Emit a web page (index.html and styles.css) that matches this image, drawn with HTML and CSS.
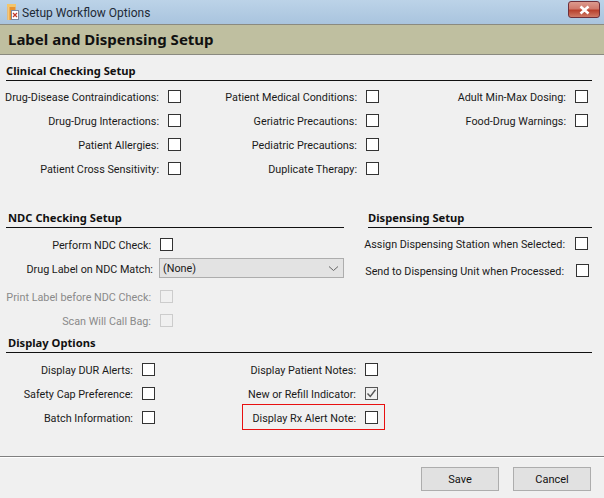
FILE: index.html
```html
<!DOCTYPE html>
<html lang="en">
<head>
<meta charset="utf-8">
<title>Setup Workflow Options</title>
<link rel="stylesheet" href="styles.css">
</head>
<body>
<div class="window">
  <div class="titlebar">
    <svg class="app-icon" width="14" height="17" viewBox="0 0 14 17"><rect x="1" y="0" width="9" height="3" fill="#f3c56a"/><rect x="1.5" y="3" width="8" height="13" fill="#e8922e"/><rect x="1.5" y="3" width="2" height="13" fill="#f6c878"/><rect x="5.500" y="6.500" width="7" height="9" fill="#fff" stroke="#7a86a0" stroke-width="1"/><path d="M7 9l4 4M11 9l-4 4" stroke="#c0392b" stroke-width="1.2"/></svg>
    <span class="title">Setup Workflow Options</span>
    <button class="close" aria-label="Close"><svg width="13" height="10" viewBox="0 0 13 10"><path d="M2.5 1.5l8 7M10.5 1.5l-8 7" stroke="#fff" stroke-width="2.6"/></svg></button>
  </div>
  <div class="band">Label and Dispensing Setup</div>
  <main class="content">
    <section class="clinical">
      <h2 class="heading">Clinical Checking Setup</h2>
      <div class="cols cols-clinical">
        <div class="col">
          <label class="row">Drug-Disease Contraindications:<i class="box"></i></label>
          <label class="row">Drug-Drug Interactions:<i class="box"></i></label>
          <label class="row">Patient Allergies:<i class="box"></i></label>
          <label class="row">Patient Cross Sensitivity:<i class="box"></i></label>
        </div>
        <div class="col">
          <label class="row">Patient Medical Conditions:<i class="box"></i></label>
          <label class="row">Geriatric Precautions:<i class="box"></i></label>
          <label class="row">Pediatric Precautions:<i class="box"></i></label>
          <label class="row">Duplicate Therapy:<i class="box"></i></label>
        </div>
        <div class="col">
          <label class="row">Adult Min-Max Dosing:<i class="box"></i></label>
          <label class="row">Food-Drug Warnings:<i class="box"></i></label>
        </div>
      </div>
    </section>
    <div class="split">
      <section class="ndc">
        <h2 class="heading">NDC Checking Setup</h2>
        <label class="row row-ndc">Perform NDC Check:<i class="box"></i></label>
        <label class="row row-select">Drug Label on NDC Match:
          <span class="select">(None)<svg width="11" height="7" viewBox="0 0 11 7"><path d="M1 1.500l4.500 4L10 1.500" fill="none" stroke="#666" stroke-width="1"/></svg></span>
        </label>
        <label class="row row-ndc disabled">Print Label before NDC Check:<i class="box"></i></label>
        <label class="row row-ndc disabled">Scan Will Call Bag:<i class="box"></i></label>
      </section>
      <section class="dispensing">
        <h2 class="heading">Dispensing Setup</h2>
        <label class="row">Assign Dispensing Station when Selected:<i class="box"></i></label>
        <label class="row row-send">Send to Dispensing Unit when Processed:<i class="box"></i></label>
      </section>
    </div>
    <section class="display">
      <h2 class="heading">Display Options</h2>
      <div class="cols cols-display">
        <div class="col">
          <label class="row">Display DUR Alerts:<i class="box"></i></label>
          <label class="row">Safety Cap Preference:<i class="box"></i></label>
          <label class="row">Batch Information:<i class="box"></i></label>
        </div>
        <div class="col">
          <label class="row">Display Patient Notes:<i class="box"></i></label>
          <label class="row">New or Refill Indicator:<i class="box checked"><svg width="11" height="11" viewBox="0 0 11 11"><path d="M1.500 5.500l2.800 3L9.500 1.800" fill="none" stroke="#555" stroke-width="1.400"/></svg></i></label>
          <label class="row alert">Display Rx Alert Note:<i class="box"></i></label>
        </div>
      </div>
    </section>
  </main>
  <footer class="footer">
    <button class="btn">Save</button>
    <button class="btn">Cancel</button>
  </footer>
</div>
</body>
</html>
```
FILE: styles.css
```css
* { box-sizing: border-box; }
html, body { margin: 0; padding: 0; }
body { width: 604px; height: 498px; overflow: hidden; background: #f0f0f0; font-family: Roboto, "Noto Sans", sans-serif; font-size: 10.800px; color: #1a1a1a; }
.window { height: 498px; display: flex; flex-direction: column; }
.titlebar { height: 24px; flex: none; display: flex; align-items: center; padding: 0 4px 0 6px; background: linear-gradient(#bcd3e8, #a9c4de); }
.app-icon { flex: none; margin-right: 2px; }
.title { flex: 1; padding-top: 2px; font-size: 12px; color: #1e2a36; }
.close { width: 32px; height: 17px; margin-top: -5px; padding: 0; border: 1px solid #6e2f3a; border-radius: 3px; display: flex; align-items: center; justify-content: center; background: linear-gradient(#dc9a8e 0, #d0796c 45%, #b8402c 55%, #cf7a66 100%); }
.band { height: 31px; flex: none; padding: 0 0 1px 8px; display: flex; align-items: center; background: #bfbfa0; border-top: 1px solid #8a8a80; border-bottom: 1px solid #8a8a80; font-family: "Noto Sans", sans-serif; font-size: 15px; font-weight: 700; color: #111; }
.content { flex: 1; padding: 0 12px 0 6px; position: relative; }
.heading { margin: 0 0 4px; height: 26px; padding: 8px 0 0; border-bottom: 1px solid #111; font-family: "Noto Sans", sans-serif; font-size: 11.200px; line-height: 15px; font-weight: 700; color: #111; }
.row { height: 24px; padding-top: 2px; display: flex; align-items: center; justify-content: flex-end; gap: 9px; white-space: nowrap; }
.box { flex: none; width: 13px; height: 13px; margin-top: -2px; background: #fff; border: 1px solid #333; display: flex; align-items: center; justify-content: center; }
.box.checked { background: #f0f0f0; border-color: #555; }
.cols { display: grid; }
.col { display: flex; flex-direction: column; }
.clinical { height: 147px; }
.clinical .heading { margin-bottom: 3px; }
.cols-clinical { grid-template-columns: 175px 198px 209px; }
.split { display: flex; gap: 24px; height: 125px; }
.ndc { width: 338px; }
.ndc .heading { padding-left: 2px; }
.row-ndc { width: 167px; }
.row-select { gap: 6px; margin-bottom: 4px; }
.select { flex: none; width: 185px; height: 20px; margin-top: -2px; display: flex; align-items: center; justify-content: space-between; padding: 0 4px 0 3px; background: #e3e3e3; border: 1px solid #adadad; }
.disabled { color: #8a8a8a; }
.disabled .box { background: #f0f0f0; border-color: #ccc; }
.dispensing { width: 224px; }
.dispensing .heading { margin-bottom: 3px; }
.dispensing .row { width: 220px; gap: 10px; }
.dispensing .row-send { width: 221px; gap: 12px; margin-top: 3px; }
.display .heading { padding-left: 2px; }
.cols-display { grid-template-columns: 149px 223px; }
.alert { position: relative; }
.alert::after { content: ""; position: absolute; left: 87px; right: -7px; top: -1px; bottom: -1px; border: 1px solid #e81010; }
.footer { flex: none; height: 42px; display: flex; justify-content: flex-end; gap: 14px; padding: 10px 13px 0 0; border-top: 1px solid #808080; box-shadow: inset 0 1px 0 #fff; }
.btn { width: 78px; height: 24px; padding: 0; background: #e1e1e1; border: 1px solid #adadad; font: inherit; font-size: 11px; color: #111; }
```
